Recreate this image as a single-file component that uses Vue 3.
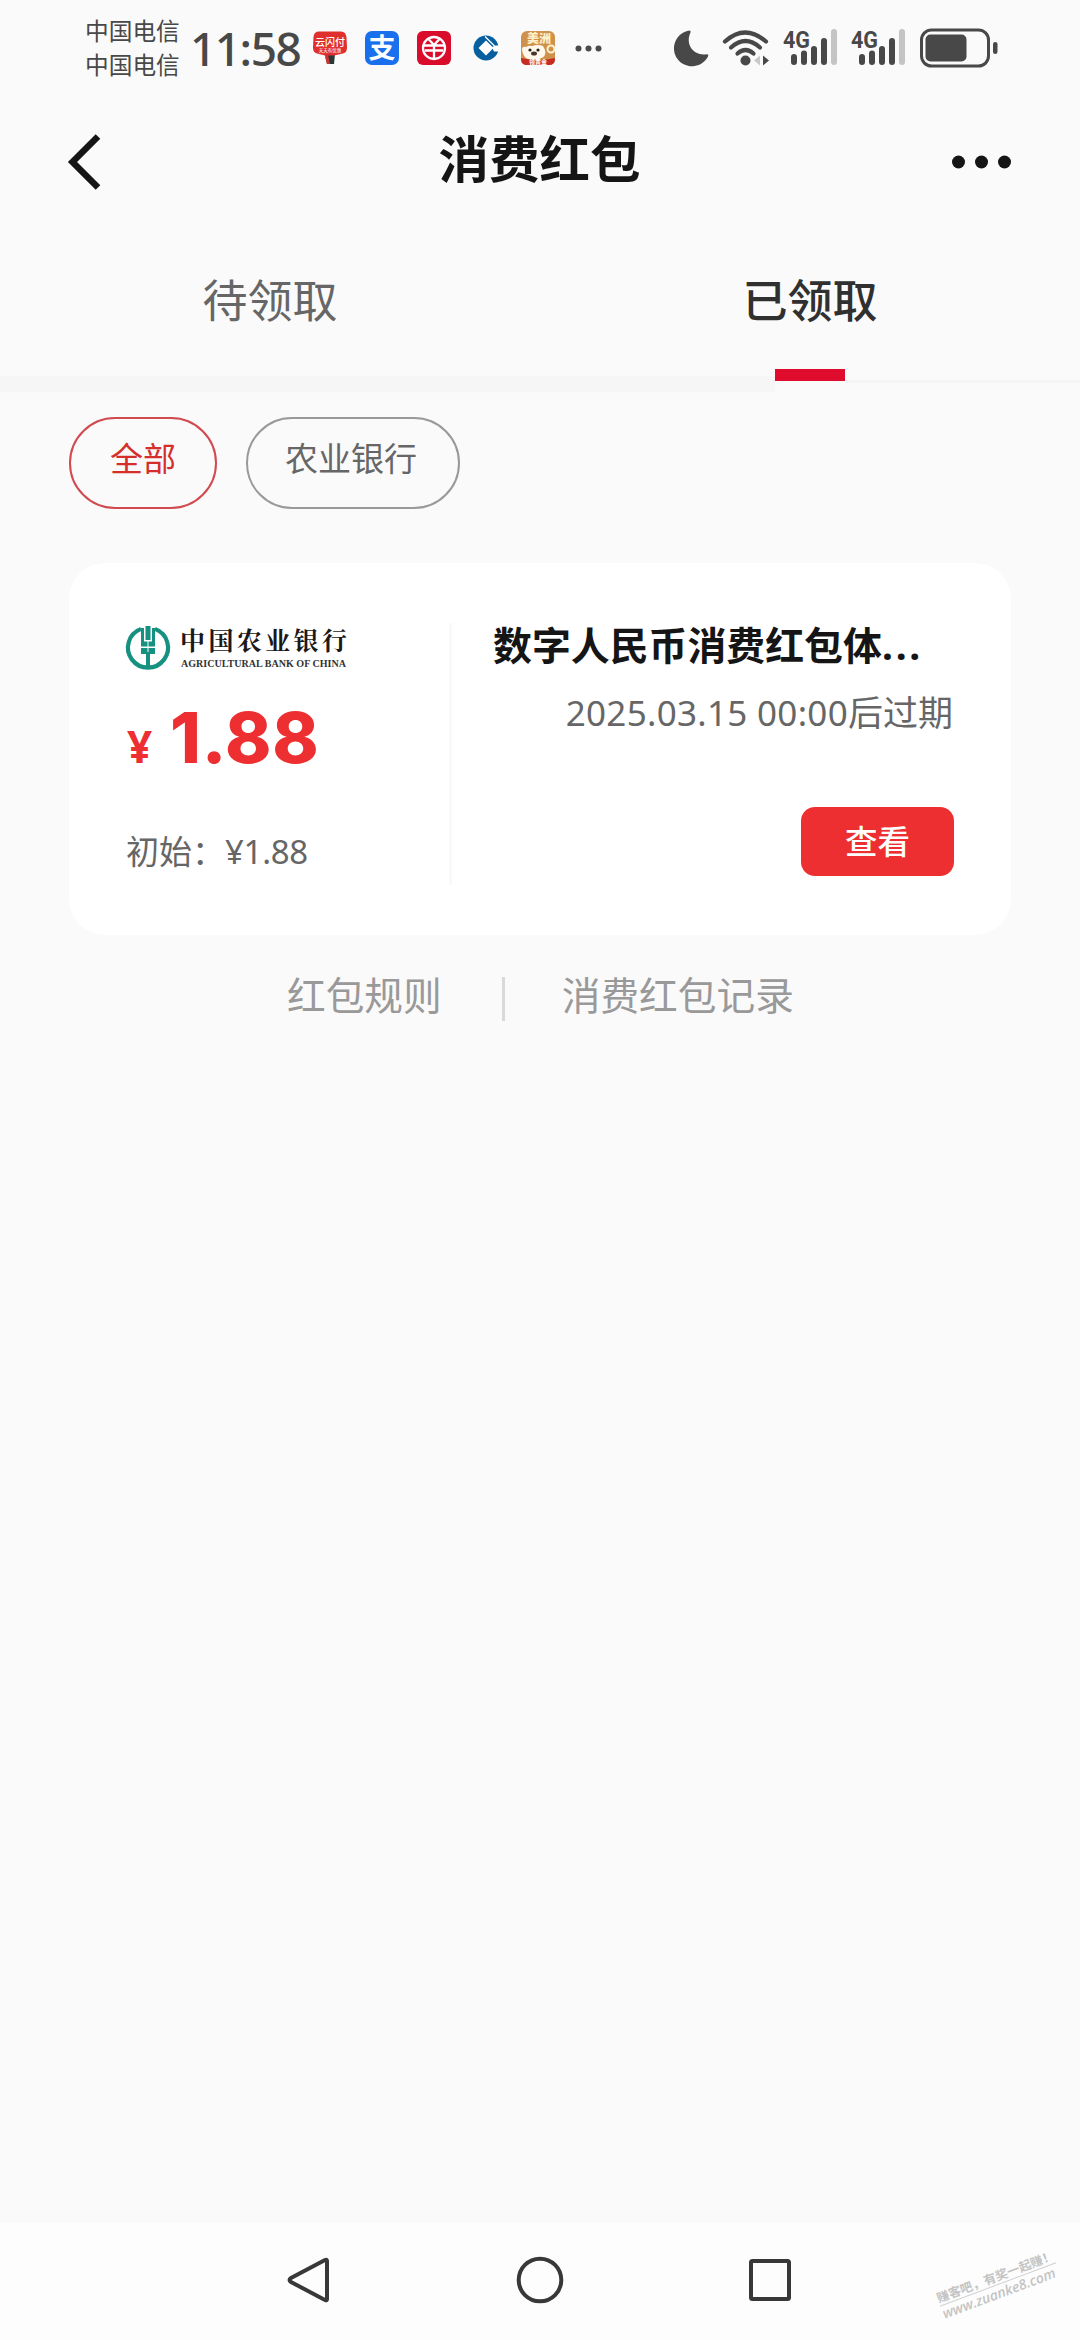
<script setup>
const tabs = [
  { label: '待领取', active: false },
  { label: '已领取', active: true },
]
const filters = [
  { label: '全部', active: true },
  { label: '农业银行', active: false },
]
const carriers = ['中国电信', '中国电信']
const signals = ['sim1', 'sim2']
</script>

<template>
  <div class="screen">
    <div class="status">
      <div class="carriers">
        <span v-for="(c, i) in carriers" :key="i">{{ c }}</span>
      </div>
      <span class="time">11:58</span>
      <div class="notices">
        <svg width="36" height="36" viewBox="0 0 36 36">
          <path d="M13 24h10l-1 10h-7z" fill="#26383a" />
          <path d="M13 27l3-3 2 10h-3z" fill="#c33" />
          <path d="M7 1.500h22q5 0 5.500 6l.5 10q0 5-4 6l-9 2H13l-8-2q-4-1-4-6L1.500 7Q2 1.500 7 1.500z" fill="#e0302e" />
          <text x="18" y="15.500" class="quick-name">云闪付</text>
          <text x="18" y="22" class="quick-sub">天天有优惠</text>
        </svg>
        <svg width="36" height="36" viewBox="0 0 36 36">
          <rect x="1" y="1" width="34" height="34" rx="7" fill="#1a6fec" />
          <text x="18" y="27.500" class="pay-mark">支</text>
        </svg>
        <svg width="36" height="36" viewBox="0 0 36 36">
          <rect x="1" y="1" width="34" height="34" rx="6" fill="#d90c2c" />
          <g fill="none" stroke="#fff" stroke-width="2.300">
            <circle cx="18" cy="18" r="11" />
            <path d="M12.500 9l5.500 6 5.500-6M8 15.500h20M9 20.500h18M18 15v14" />
          </g>
        </svg>
        <svg width="36" height="36" viewBox="0 0 36 36">
          <circle cx="18" cy="18" r="12.500" fill="#075f9f" />
          <path d="M18 10.500l7.500 7.500-7.500 7.500-7.500-7.500z" fill="#fff" />
          <path d="M24 17l4-1.500h5v6h-7z" fill="#fff" />
          <path d="M17 6.500L28 17.500" stroke="#fff" stroke-width="1.300" />
        </svg>
        <svg width="36" height="36" viewBox="0 0 36 36">
          <rect x="1" y="1" width="34" height="34" rx="6" fill="#cf924c" />
          <text x="19" y="13" class="game-name">美洲</text>
          <path d="M2 20q0-4 4-3 3-2 6-1 6-2 11 0l2 4q2 7-6 9H8q-5-2-6-9z" fill="#fff8ea" />
          <circle cx="10" cy="20" r="1.600" fill="#222" />
          <circle cx="18" cy="20" r="1.600" fill="#222" />
          <ellipse cx="14" cy="23.500" rx="3" ry="2" fill="#4b332a" />
          <circle cx="31" cy="19" r="3.500" fill="none" stroke="#fff1cf" stroke-width="2" />
          <path d="M1 28q17 4 34 0v1q0 6-6 6H7q-6 0-6-6z" fill="#c72c22" />
          <text x="18" y="33.500" class="game-sub">领黄金</text>
        </svg>
        <svg width="36" height="36" viewBox="0 0 36 36" fill="#4b4b4b">
          <circle cx="6.500" cy="18.500" r="3" />
          <circle cx="16.500" cy="18.500" r="3" />
          <circle cx="26.500" cy="18.500" r="3" />
        </svg>
      </div>
      <div class="system">
        <svg class="moon" width="36" height="38" viewBox="0 0 36 38">
          <path d="M15.500 1.500A18 18 0 1 0 34 27.500Q35 25 32.500 25.200C19 27 11 15 16.500 3.500Q17 1.500 15.500 1.500z" fill="#484848" />
        </svg>
        <svg class="wifi" width="48" height="38" viewBox="0 0 48 38">
          <g fill="none" stroke="#484848" stroke-width="4.200" stroke-linecap="round">
            <path d="M3 12.500Q23 -5.500 44 12.500" />
            <path d="M9 18.500Q23.500 5.500 38 18.500" />
            <path d="M15.500 24.500Q23.500 17.500 31.500 24.500" />
          </g>
          <circle cx="23.500" cy="31.500" r="5" fill="#484848" />
          <path d="M38 26.500v10l-6-5z" fill="#c9c9c9" />
          <path d="M41 26.500v10l6-5z" fill="#484848" />
        </svg>
        <svg v-for="s in signals" :key="s" class="signal" width="56" height="40" viewBox="0 0 56 40">
          <text x="0" y="19.500" textLength="27" lengthAdjust="spacingAndGlyphs" class="net">4G</text>
          <g stroke="#484848" stroke-width="6" stroke-linecap="round">
            <path d="M11 29v5M21 25.500v8.500M31 21v13M41 13v21" />
            <path d="M51 4v30" stroke="#c4c4c4" />
          </g>
        </svg>
        <svg class="battery" width="80" height="42" viewBox="0 0 80 42">
          <rect x="2.500" y="3" width="67" height="36" rx="10" fill="none" stroke="#484848" stroke-width="3" />
          <rect x="6.500" y="7.500" width="41" height="27" rx="5" fill="#484848" />
          <rect x="74" y="15" width="4.500" height="12" rx="2.200" fill="#484848" />
        </svg>
      </div>
    </div>

    <header class="header">
      <svg width="36" height="56" viewBox="0 0 36 56">
        <path d="M32 2.500L6.500 28l25.500 25.500" fill="none" stroke="#151515" stroke-width="6.500" />
      </svg>
      <h1>消费红包</h1>
      <svg width="62" height="20" viewBox="0 0 62 20" fill="#151515">
        <circle cx="8.500" cy="10" r="6.500" />
        <circle cx="31.500" cy="10" r="6.500" />
        <circle cx="54.500" cy="10" r="6.500" />
      </svg>
    </header>

    <nav class="tabs">
      <div v-for="t in tabs" :key="t.label" class="tab" :class="{ active: t.active }">
        <span>{{ t.label }}</span>
        <i></i>
      </div>
    </nav>
    <div class="rule"><i></i><b></b></div>

    <div class="filters">
      <button v-for="f in filters" :key="f.label" class="chip" :class="{ active: f.active }">{{ f.label }}</button>
    </div>

    <section class="card">
      <div class="amount">
        <div class="bank">
          <svg width="46" height="46" viewBox="0 0 46 46">
            <g fill="none" stroke="#169080">
              <path d="M16 3.900a20 20 0 1 0 14 0" stroke-width="4.200" />
              <path d="M17.500 3v15M28.500 3v15" stroke-width="3" />
            </g>
            <g fill="#169080">
              <rect x="20.500" y="1" width="5" height="14" />
              <path d="M16 16.500h6.500v5H16zM23.500 16.500H30v5h-6.500zM16 23h6.500v6H16zM23.500 23H30v6h-6.500z" />
              <rect x="21" y="27" width="4" height="16" />
            </g>
          </svg>
          <div class="bank-name">
            <strong>中国农业银行</strong>
            <svg width="168" height="12" viewBox="0 0 168 12">
              <text x="1" y="9.500" textLength="165" lengthAdjust="spacingAndGlyphs">AGRICULTURAL BANK OF CHINA</text>
            </svg>
          </div>
        </div>
        <div class="price"><small>¥</small><span>1.88</span></div>
        <div class="initial">初始：<span>¥1.88</span></div>
      </div>
      <div class="split"></div>
      <div class="detail">
        <h2>数字人民币消费红包体<span>...</span></h2>
        <p><span>2025.03.15 00:00</span>后过期</p>
        <button class="view">查看</button>
      </div>
    </section>

    <div class="links">
      <span>红包规则</span>
      <i></i>
      <span>消费红包记录</span>
    </div>

    <div class="navbar">
      <svg width="48" height="50" viewBox="0 0 48 50">
        <path d="M40 5L6 23q-3 2 0 4l34 18q2 1 2-1V6q0-2-2-1z" />
      </svg>
      <svg width="50" height="50" viewBox="0 0 50 50"><circle cx="25" cy="25" r="21.300" /></svg>
      <svg width="50" height="50" viewBox="0 0 50 50"><rect x="6" y="6" width="38" height="38" rx="1.500" /></svg>
      <div class="watermark">
        <span>赚客吧，有奖一起赚！</span>
        <em>www.zuanke8.com</em>
      </div>
    </div>
  </div>
</template>

<style>
body {
  margin: 0;
  background: #fafafa;
}
</style>

<style scoped>
.screen {
  width: 1080px;
  height: 2340px;
  display: flex;
  flex-direction: column;
  overflow: hidden;
  background: #fafafa;
  font-family: "Noto Sans CJK SC", sans-serif;
  color: #151515;
}
svg { display: block; flex: none; overflow: visible; }
button { font-family: inherit; padding: 0; }

.status {
  height: 96px;
  display: flex;
  align-items: center;
  padding-left: 85px;
  box-sizing: border-box;
  color: #484848;
}
.carriers {
  width: 105px;
  display: flex;
  flex-direction: column;
  margin-top: -2px;
  font-size: 23.7px;
  line-height: 34px;
}
.time {
  width: 122px;
  font-family: "Noto Sans", sans-serif;
  font-size: 46px;
  line-height: 60px;
  font-weight: 500;
  letter-spacing: -1.5px;
}
.notices { display: flex; gap: 16px; }
.quick-name { font-size: 10px; font-weight: 500; fill: #fff; text-anchor: middle; }
.quick-sub { font-size: 4.5px; fill: #fff; text-anchor: middle; }
.pay-mark { font-size: 27px; font-weight: 700; fill: #fff; text-anchor: middle; }
.game-name { font-size: 12px; font-weight: 900; fill: #fff0c8; text-anchor: middle; }
.game-sub { font-size: 6px; font-weight: 700; fill: #fff; text-anchor: middle; }
.system { display: flex; align-items: center; margin-left: 66px; }
.wifi { margin-left: 12px; }
.signal { margin-left: 12px; }
.wifi + .signal { margin-left: 13px; }
.net { font: 700 24px Roboto, sans-serif; fill: #484848; }
.battery { margin-left: 12px; }

.header {
  height: 132px;
  display: flex;
  align-items: center;
  justify-content: space-between;
  padding: 0 68px 0 66px;
}
h1 { margin: 0 0 12px 27px; font-size: 50.5px; line-height: 70px; font-weight: 700; }

.tabs { display: flex; height: 153px; }
.tab {
  flex: 1;
  display: flex;
  flex-direction: column;
  align-items: center;
  justify-content: space-between;
  font-size: 45px;
  line-height: 66px;
  padding-top: 38px;
  color: #666;
  box-sizing: border-box;
}
.tab.active { color: #303030; font-weight: 500; }
.tab i { width: 70px; height: 12px; }
.tab.active i { background: #df0c2d; }
.rule { height: 11px; margin-top: -5px; padding-bottom: 5px; display: flex; }
.rule i { width: 775px; height: 16px; background: #f6f6f6; }
.rule b { flex: 1; height: 3px; margin: 4px 0 0 70px; background: #f5f5f5; }

.filters { display: flex; gap: 29px; padding: 25px 69px 0; }
.chip {
  width: 148px;
  height: 92px;
  padding-bottom: 12px;
  box-sizing: border-box;
  border: 2px solid #999;
  border-radius: 46px;
  background: transparent;
  color: #666;
  font-size: 33px;
}
.chip:last-child { width: 214px; padding-right: 4px; }
.chip.active { border-color: #d04a50; color: #d42f2b; }

.card {
  display: flex;
  margin: 54px 69px 0;
  height: 372px;
  padding: 60px 57px 50px;
  box-sizing: border-box;
  border-radius: 36px;
  background: #fff;
}
.amount { width: 323px; }
.bank { display: flex; gap: 9px; height: 48px; margin-left: -1px; }
.bank > svg { margin-top: 2px; }
.bank-name strong {
  display: block;
  margin: -1px 0 1px 0;
  font: 700 25px/34px "Noto Serif CJK SC", "Noto Sans CJK SC", serif;
  letter-spacing: 3.4px;
  color: #1c1818;
  white-space: nowrap;
}
.bank-name text { font: 700 10.5px "Liberation Serif", serif; fill: #333; }
.price {
  display: flex;
  align-items: baseline;
  height: 100px;
  margin-top: 17px;
  line-height: 100px;
  color: #ee2f31;
  font-weight: 700;
}
.price small { width: 44px; padding-left: 1px; box-sizing: border-box; font: 700 44px/100px "Noto Sans", sans-serif; }
.price span { font-family: Inter, sans-serif; font-size: 70px; font-weight: 800; letter-spacing: 0.8px; }
.initial { margin-top: 37px; font-size: 33px; line-height: 50px; color: #666; white-space: nowrap; }
.initial span { font-family: "Noto Sans", sans-serif; letter-spacing: -0.3px; }
.split { width: 3px; background: #f9f9f9; }
.detail {
  flex: 1;
  display: flex;
  flex-direction: column;
  align-items: flex-end;
}
h2 {
  align-self: flex-start;
  margin: -8px 0 0 41px;
  font-size: 38.9px;
  line-height: 56px;
  font-weight: 700;
  white-space: nowrap;
}
h2 span { font-family: "Noto Sans", sans-serif; letter-spacing: 2.8px; }
p {
  margin: 13px 1px 0 0;
  font-size: 35px;
  line-height: 50px;
  color: #666;
  white-space: nowrap;
}
p span { font-family: "Noto Sans", sans-serif; letter-spacing: 0.3px; }
.view {
  width: 153px;
  height: 69px;
  margin-top: 69px;
  padding-bottom: 5px;
  border: 0;
  border-radius: 14px;
  background: #ee2f31;
  color: #fff;
  font-size: 32.5px;
  font-weight: 500;
}

.links {
  display: flex;
  align-items: center;
  height: 60px;
  margin-top: 28px;
  padding-left: 287px;
  font-size: 38.7px;
  line-height: 60px;
  color: #999;
}
.links i { width: 3px; height: 44px; margin: 12px 57px 0 60px; background: #d9d9d9; }

.navbar {
  position: relative;
  display: flex;
  align-items: center;
  gap: 180px;
  height: 117px;
  margin-top: auto;
  padding: 0 0 3px 285px;
  box-sizing: border-box;
  background: #fdfdfd;
}
.navbar svg { fill: none; stroke: #383838; stroke-width: 4; }
.navbar svg:first-child { margin-right: 2px; }
.watermark {
  position: absolute;
  left: 936px;
  top: 45px;
  width: 124px;
  transform: rotate(-20.5deg);
  color: #c4c4c4;
  white-space: nowrap;
}
.watermark span {
  display: block;
  border-bottom: 1px solid #d0d0d0;
  font-size: 12.5px;
  line-height: 16px;
  font-weight: 700;
}
.watermark em { display: block; font: italic 600 14px/16px "Open Sans", sans-serif; }
</style>
